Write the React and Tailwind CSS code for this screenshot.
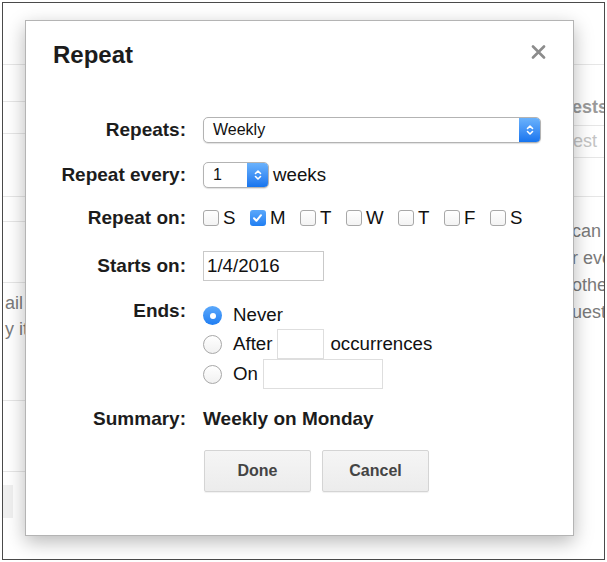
import { useState } from 'react';

const font = { fontFamily: '"Liberation Sans", Arial, Helvetica, sans-serif' };

// little up/down chevrons on the blue part of a mac popup
const Chevrons = () => (
    <svg width="8" height="12" viewBox="0 0 8 12" fill="none" stroke="white" strokeWidth="1.6" strokeLinecap="round" strokeLinejoin="round">
        <path d="M1.5 4.5 L4 2 L6.5 4.5" />
        <path d="M1.5 7.5 L4 10 L6.5 7.5" />
    </svg>
);

const Popup = ({ value, width, textSize = 'text-[16px]' }) => (
    <div className={`flex h-[26px] ${width} rounded-[5px] border border-[#b3b3b3] bg-white shadow-[0_1px_1px_rgba(0,0,0,0.12)] overflow-hidden`}>
        <div className={`flex-1 flex items-center pl-[9px] text-[#111] ${textSize}`}>{value}</div>
        <div className="w-[21px] flex items-center justify-center bg-gradient-to-b from-[#6ab2fc] to-[#1574ee]">
            <Chevrons />
        </div>
    </div>
);

const Checkbox = ({ checked }) => (
    checked ? (
        <div className="w-[16px] h-[16px] rounded-[3px] bg-gradient-to-b from-[#5aa8fb] to-[#1e7ef2] flex items-center justify-center">
            <svg width="11" height="10" viewBox="0 0 11 10" fill="none" stroke="white" strokeWidth="2" strokeLinecap="round" strokeLinejoin="round">
                <path d="M2 5.3 L4.4 7.8 L9 2.2" />
            </svg>
        </div>
    ) : (
        <div className="w-[16px] h-[16px] rounded-[3px] border border-[#a8a8a8] bg-gradient-to-b from-white to-[#f3f3f3]" />
    )
);

const Radio = ({ checked }) => (
    checked ? (
        <div className="w-[19px] h-[19px] rounded-full bg-gradient-to-b from-[#5aa8fb] to-[#1e7ef2] flex items-center justify-center">
            <div className="w-[6px] h-[6px] rounded-full bg-white" />
        </div>
    ) : (
        <div className="w-[19px] h-[19px] rounded-full border border-[#a8a8a8] bg-gradient-to-b from-white to-[#f1f1f1]" />
    )
);

const Label = ({ children, className = '' }) => (
    <div className={`w-[134px] shrink-0 text-right font-bold text-[19px] text-[#1c1c1c] ${className}`}>{children}</div>
);

const days = [
    { d: 'S', on: false },
    { d: 'M', on: true },
    { d: 'T', on: false },
    { d: 'W', on: false },
    { d: 'T', on: false },
    { d: 'F', on: false },
    { d: 'S', on: false },
];

export default function App() {
    const [ends] = useState('never');

    return (
        <div className="relative w-[607px] h-[562px] bg-white overflow-hidden" style={font}>
            {/* page behind the dialog */}
            <div className="ml-[2px] mt-[2px] w-[603px] h-[558px] border-[1.5px] border-[#4a4a4a] bg-white flex overflow-hidden">
                <div className="w-[45px] shrink-0 flex flex-col">
                    <div className="h-[62px] border-b border-[#e6e6e6]" />
                    <div className="h-[37px] border-b border-[#e6e6e6]" />
                    <div className="h-[32px] border-b border-[#e6e6e6]" />
                    <div className="h-[63px] border-b border-[#e6e6e6]" />
                    <div className="h-[25px] border-b border-[#e6e6e6]" />
                    <div className="h-[61px] border-b border-[#e6e6e6]" />
                    <div className="h-[118px] border-b border-[#e6e6e6] pt-[7px] pl-[2px] text-[18px] leading-[26px] text-[#7a7a7a] whitespace-nowrap">
                        <div>ail</div>
                        <div>y it</div>
                    </div>
                    <div className="h-[71px] border-b border-[#e6e6e6]" />
                    <div className="mt-[13px] w-[10px] h-[33px] bg-[#f0f0f0]" />
                </div>
                <div className="flex-1" />
                <div className="w-[44px] shrink-0 flex flex-col whitespace-nowrap text-[18px]">
                    <div className="h-[62px] border-b border-[#e6e6e6]" />
                    <div className="h-[61px] border-b border-[#e6e6e6] flex flex-col justify-end pb-[8px] pl-[12px] font-bold text-[#9a9a9a] leading-[20px]">ests</div>
                    <div className="h-[32px] border-b border-[#e6e6e6] flex items-center pl-[13px] text-[#c4c4c4]">est</div>
                    <div className="h-[39px] border-b border-[#e6e6e6]" />
                    <div className="pt-[21px] pl-[12px] leading-[27px] text-[#7a7a7a]">
                        <div>can</div>
                        <div>r eve</div>
                        <div>othe</div>
                        <div>uest</div>
                    </div>
                </div>
            </div>

            {/* Repeat dialog, lies over the page */}
            <div className="absolute left-[25px] top-[20px] w-[549px] h-[516px] bg-white border border-[#b4b4b4] shadow-[0_6px_18px_rgba(0,0,0,0.28)] pl-[27px] pt-[20px]">
                <button className="absolute right-[27px] top-[24px] w-[16px] h-[14px] flex items-center justify-center">
                    <svg width="15" height="14" viewBox="0 0 15 14" stroke="#8c8c8c" strokeWidth="2.6" strokeLinecap="round">
                        <path d="M2 1.5 L13 12.5 M13 1.5 L2 12.5" />
                    </svg>
                </button>

                <h2 className="text-[24px] leading-[28px] font-bold text-[#1c1c1c]">Repeat</h2>

                <div className="mt-[48px] -ml-[1px] flex flex-col">
                    <div className="flex items-center h-[26px]">
                        <Label>Repeats:</Label>
                        <div className="ml-[17px]">
                            <Popup value="Weekly" width="w-[338px]" />
                        </div>
                    </div>

                    <div className="mt-[19px] flex items-center h-[26px]">
                        <Label>Repeat every:</Label>
                        <div className="ml-[17px] flex items-center">
                            <Popup value="1" width="w-[66px]" />
                            <span className="ml-[4px] text-[18.7px] text-[#111]">weeks</span>
                        </div>
                    </div>

                    <div className="mt-[20px] flex items-center h-[20px]">
                        <Label>Repeat on:</Label>
                        <div className="ml-[17px] flex items-center text-[18.7px] text-[#111]">
                            {days.map((x, i) => (
                                <div key={i} className="flex items-center mr-[14.5px]">
                                    <Checkbox checked={x.on} />
                                    <span className="ml-[4px]">{x.d}</span>
                                </div>
                            ))}
                        </div>
                    </div>

                    <div className="mt-[23px] flex items-center h-[30px]">
                        <Label>Starts on:</Label>
                        <div className="ml-[17px]">
                            <div className="w-[121px] h-[30px] border border-[#c9c9c9] flex items-center pl-[3px] text-[18.7px] text-[#111]">1/4/2016</div>
                        </div>
                    </div>

                    <div className="mt-[21px] flex items-start">
                        <Label className="leading-[18px]">Ends:</Label>
                        <div className="ml-[17px] flex flex-col text-[18.7px] text-[#111]">
                            <div className="h-[27px] flex items-center">
                                <Radio checked={ends === 'never'} />
                                <span className="ml-[11px]">Never</span>
                            </div>
                            <div className="h-[30px] flex items-center">
                                <Radio checked={ends === 'after'} />
                                <span className="ml-[11px]">After</span>
                                <div className="ml-[5px] w-[47px] h-[30px] border border-[#dedede]" />
                                <span className="ml-[6px]">occurrences</span>
                            </div>
                            <div className="h-[30px] flex items-center">
                                <Radio checked={ends === 'on'} />
                                <span className="ml-[11px]">On</span>
                                <div className="ml-[5px] w-[120px] h-[30px] border border-[#dedede]" />
                            </div>
                        </div>
                    </div>

                    <div className="mt-[19px] flex items-center h-[22px]">
                        <Label>Summary:</Label>
                        <div className="ml-[17px] font-bold text-[19px] text-[#1c1c1c]">Weekly on Monday</div>
                    </div>

                    <div className="mt-[20px] flex gap-[11px] ml-[152px]">
                        <button className="w-[107px] h-[42px] rounded-[2px] border border-[#d4d4d4] bg-gradient-to-b from-[#f5f5f5] to-[#ececec] font-bold text-[16px] text-[#444] shadow-[0_1px_1px_rgba(0,0,0,0.06)]">Done</button>
                        <button className="w-[107px] h-[42px] rounded-[2px] border border-[#d4d4d4] bg-gradient-to-b from-[#f5f5f5] to-[#ececec] font-bold text-[16px] text-[#444] shadow-[0_1px_1px_rgba(0,0,0,0.06)]">Cancel</button>
                    </div>
                </div>
            </div>
        </div>
    );
}
